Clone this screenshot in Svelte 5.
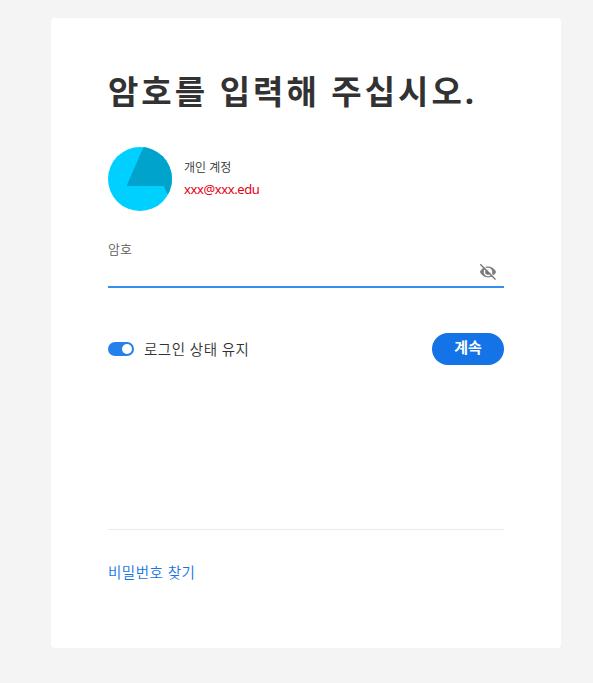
<script lang="ts">
  let password = $state("");
  let visible = $state(false);
  let keepSignedIn = $state(true);
</script>

<main class="card">
  <h1>암호를 입력해 주십시오.</h1>

  <section class="account">
    <svg class="avatar" viewBox="0 0 64 64" aria-hidden="true">
      <defs>
        <clipPath id="avatar-clip"><circle cx="32" cy="32" r="32" /></clipPath>
      </defs>
      <g clip-path="url(#avatar-clip)">
        <rect width="64" height="64" fill="#00d0ff" />
        <path d="M35.5 0H64V56L55.5 39H18.5Z" fill="#00a3cc" />
      </g>
    </svg>
    <div class="identity">
      <span class="account-type">개인 계정</span>
      <span class="email">xxx@xxx.edu</span>
    </div>
  </section>

  <form onsubmit={(e) => e.preventDefault()}>
    <label class="field-label" for="password">암호</label>
    <div class="field">
      <input id="password" type={visible ? "text" : "password"} bind:value={password} />
      <button class="reveal" type="button" aria-label="암호 표시" onclick={() => (visible = !visible)}>
        <svg viewBox="0 0 18 18">
          <path
            d="M9 3.6C5.2 3.6 2.2 6.1.9 9c1.3 2.9 4.3 5.4 8.1 5.4s6.8-2.5 8.1-5.4C15.8 6.1 12.8 3.6 9 3.6Zm0 9.6A4.2 4.2 0 1 1 9 4.8a4.2 4.2 0 0 1 0 8.4Z"
            fill="#808080"
          />
          <path d="M9 6.2A2.8 2.8 0 1 0 11.8 9 1.4 1.4 0 0 1 9.6 6.3Z" fill="#747474" />
          <path d="M2.7 1.1 17.4 15.8" stroke="#fff" stroke-width="1.2" />
          <path d="M1.3 1.3 16.5 16.5" stroke="#747474" stroke-width="1.3" />
        </svg>
      </button>
    </div>

    <div class="actions">
      <button
        class="keep"
        type="button"
        role="switch"
        aria-checked={keepSignedIn}
        onclick={() => (keepSignedIn = !keepSignedIn)}
      >
        <span class="switch" class:on={keepSignedIn}><span class="knob"></span></span>
        <span class="keep-label">로그인 상태 유지</span>
      </button>
      <button class="submit" type="submit">계속</button>
    </div>
  </form>

  <footer>
    <a href="#reset">비밀번호 찾기</a>
  </footer>
</main>

<style>
  :global(body) {
    background: #f4f4f4;
    font-family: "Noto Sans", "Noto Sans CJK KR", sans-serif;
    font-weight: 350;
  }

  .card {
    box-sizing: border-box;
    width: 510px;
    height: 630px;
    margin: 18px 0 0 51px;
    padding: 50px 57px 0;
    border-radius: 4px;
    background: #fff;
  }

  h1 {
    margin: 0;
    font-size: 33px;
    line-height: 48px;
    font-weight: 700;
    letter-spacing: 3px;
    white-space: nowrap;
    color: #323232;
  }

  .account {
    display: flex;
    gap: 12px;
    margin-top: 31px;
  }

  .avatar {
    flex: none;
    width: 64px;
    height: 64px;
  }

  .identity {
    display: flex;
    flex-direction: column;
    padding-top: 11px;
    white-space: nowrap;
  }

  .account-type {
    font-size: 12px;
    line-height: 20px;
    color: #323232;
  }

  .email {
    font-size: 13px;
    line-height: 22px;
    letter-spacing: -0.4px;
    font-weight: 400;
    color: #e5000f;
  }

  .field-label {
    display: block;
    margin-top: 28px;
    margin-bottom: 1px;
    font-size: 13px;
    line-height: 20px;
    color: #5c5c5c;
  }

  .field {
    display: flex;
    align-items: center;
    height: 28px;
    border-bottom: 2px solid #378ef0;
    box-sizing: border-box;
  }

  input {
    flex: 1;
    min-width: 0;
    height: 24px;
    padding: 0;
    border: 0;
    outline: 0;
    background: none;
    font-size: 16px;
  }

  button {
    padding: 0;
    border: 0;
    background: none;
    font-family: inherit;
    font-weight: inherit;
    cursor: pointer;
  }

  .reveal {
    width: 18px;
    height: 18px;
    margin: 0 7px 3px 0;
  }

  .reveal svg {
    display: block;
  }

  .actions {
    display: flex;
    justify-content: space-between;
    align-items: center;
    height: 32px;
    margin-top: 45px;
  }

  .keep {
    display: flex;
    align-items: center;
    gap: 10px;
  }

  .switch {
    display: flex;
    box-sizing: border-box;
    width: 26px;
    height: 14px;
    padding: 2px;
    border-radius: 7px;
    background: #b3b3b3;
  }

  .switch.on {
    justify-content: flex-end;
    background: #2680eb;
  }

  .knob {
    width: 10px;
    height: 10px;
    border-radius: 50%;
    background: #fff;
  }

  .keep-label {
    font-size: 14.5px;
    line-height: 20px;
    letter-spacing: 0.5px;
    white-space: nowrap;
    color: #323232;
  }

  .submit {
    width: 72px;
    height: 32px;
    padding-bottom: 4px;
    border-radius: 16px;
    background: #1473e6;
    color: #fff;
    font-size: 15px;
    line-height: 20px;
    font-weight: 700;
  }

  footer {
    margin-top: 164px;
    padding-top: 30px;
    border-top: 1px solid #eaeaea;
  }

  a {
    display: block;
    font-size: 14.5px;
    line-height: 24px;
    letter-spacing: 0.5px;
    color: #1473e6;
    text-decoration: none;
  }
</style>
